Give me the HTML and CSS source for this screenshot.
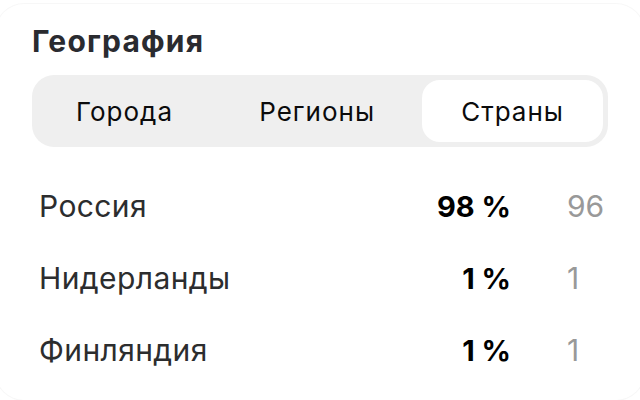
FILE: index.html
```html
<!DOCTYPE html>
<html lang="ru">
<head>
<meta charset="utf-8">
<link rel="stylesheet" href="styles.css">
</head>
<body>
<div class="card">
  <h2 class="title">География</h2>
  <div class="tabs">
    <div class="tab">Города</div>
    <div class="tab">Регионы</div>
    <div class="tab active">Страны</div>
  </div>
  <div class="rows">
    <div class="row"><span class="name">Россия</span><span class="pct">98 %</span><span class="cnt">96</span></div>
    <div class="row"><span class="name">Нидерланды</span><span class="pct">1 %</span><span class="cnt">1</span></div>
    <div class="row"><span class="name">Финляндия</span><span class="pct">1 %</span><span class="cnt">1</span></div>
  </div>
</div>
</body>
</html>
```
FILE: styles.css
```css
* { box-sizing: border-box; }
html, body { margin: 0; padding: 0; background: #ffffff; }
body {
  width: 640px;
  height: 400px;
  overflow: hidden;
  font-family: Inter, "Noto Sans", sans-serif;
  padding: 4px 0 0 0;
}
.card {
  background: #fff;
  border-radius: 28px;
  box-shadow: 0 0 0 1px rgba(0,0,0,0.03);
  margin: 0 -4px 0 -4px;
  height: 396px;
  padding: 19px 36px 0 36px;
}
.title {
  margin: 0;
  font-size: 30px;
  line-height: 36px;
  font-weight: 700;
  letter-spacing: 1.2px;
  color: #2a2b30;
}
.tabs {
  margin-top: 16px;
  background: #efefef;
  border-radius: 22px;
  padding: 5px;
  height: 72px;
  display: flex;
  justify-content: space-between;
}
.tab {
  padding: 0 39px;
  display: flex;
  align-items: center;
  border-radius: 18px;
  font-size: 26px;
  letter-spacing: 1px;
  color: #0b0b0c;
}
.tab.active { background: #fff; }
.rows {
  margin-top: 23px;
  padding: 0 7px;
}
.row {
  display: flex;
  align-items: baseline;
  height: 72px;
  line-height: 72px;
  font-size: 30px;
}
.name { flex: 1; color: #2c2d2e; letter-spacing: 0.4px; }
.pct { font-weight: 700; font-size: 29px; color: #000; text-align: right; }
.cnt { width: 90px; padding-left: 56px; color: #999; }
```
